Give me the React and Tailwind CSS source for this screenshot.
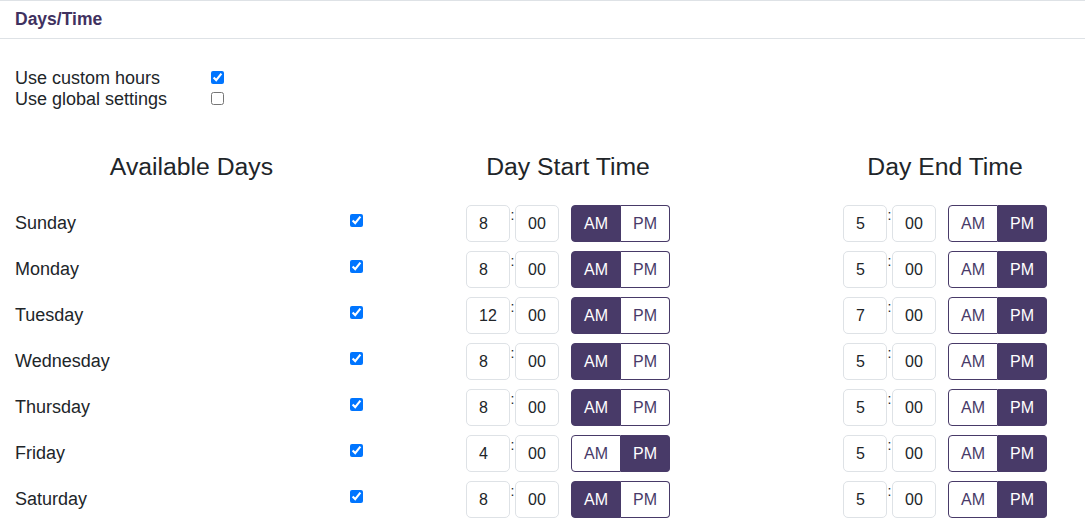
const DAYS = [
  { day: 'Sunday', start: ['8', '00', 'AM'], end: ['5', '00', 'PM'] },
  { day: 'Monday', start: ['8', '00', 'AM'], end: ['5', '00', 'PM'] },
  { day: 'Tuesday', start: ['12', '00', 'AM'], end: ['7', '00', 'PM'] },
  { day: 'Wednesday', start: ['8', '00', 'AM'], end: ['5', '00', 'PM'] },
  { day: 'Thursday', start: ['8', '00', 'AM'], end: ['5', '00', 'PM'] },
  { day: 'Friday', start: ['4', '00', 'PM'], end: ['5', '00', 'PM'] },
  { day: 'Saturday', start: ['8', '00', 'AM'], end: ['5', '00', 'PM'] },
]

function TimePicker({ hour, minute, period }) {
  return (
    <div className="flex items-center h-[37px]">
      <div className="w-[44px] h-[37px] border border-[#dee2e6] rounded-[5px] flex items-center pl-[12px] text-[16px] text-[#212529]">
        {hour}
      </div>
      <span className="w-[5px] self-start text-[14px] leading-[14px] pt-[3px] text-[#212529] text-center">:</span>
      <div className="w-[44px] h-[37px] border border-[#dee2e6] rounded-[5px] flex items-center pl-[12px] text-[16px] text-[#212529]">
        {minute}
      </div>
      <div className="flex ml-[12px] h-[37px]">
        <div
          className={`w-[50px] h-[37px] flex items-center justify-center rounded-l-[4px] border border-[#483a68] text-[16px] ${
            period === 'AM' ? 'bg-[#483a68] text-white' : 'bg-white text-[#483a68]'
          }`}
        >
          AM
        </div>
        <div
          className={`w-[49px] h-[37px] flex items-center justify-center rounded-r-[4px] border border-l-0 border-[#483a68] text-[16px] ${
            period === 'PM' ? 'bg-[#483a68] text-white' : 'bg-white text-[#483a68]'
          }`}
        >
          PM
        </div>
      </div>
    </div>
  )
}

export default function App() {
  return (
    <div className="w-[1085px] h-[527px] overflow-hidden bg-white text-[#212529]" style={{ fontFamily: '"Liberation Sans", Arial, sans-serif' }}>
      <div className="border-t border-b border-[#dee2e6] h-[39px] px-[15px] flex items-center">
        <h2 className="text-[17.5px] font-bold text-[#3f3160]">Days/Time</h2>
      </div>

      <div className="px-[15px] pt-[29px]">
        <div className="grid grid-cols-[196px_20px] text-[18px] leading-[21px]">
          <span>Use custom hours</span>
          <input type="checkbox" defaultChecked className="w-[13px] h-[13px] mt-[3px]" />
          <span>Use global settings</span>
          <input type="checkbox" className="w-[13px] h-[13px] mt-[3px]" />
        </div>
      </div>

      <div className="flex w-[1137px] mt-[42px]">
        <div className="w-[383px] shrink-0">
          <h3 className="text-[24.75px] leading-[30px] text-center">Available Days</h3>
        </div>
        <div className="w-[370px] shrink-0">
          <h3 className="text-[24.75px] leading-[30px] text-center">Day Start Time</h3>
        </div>
        <div className="w-[384px] shrink-0">
          <h3 className="text-[24.75px] leading-[30px] text-center">Day End Time</h3>
        </div>
      </div>

      <div className="mt-[23px] flex flex-col gap-[9px]">
        {DAYS.map(d => (
          <div key={d.day} className="flex w-[1137px] items-center h-[37px]">
            <div className="w-[383px] shrink-0 flex items-center pl-[15px]">
              <span className="w-[335px] text-[18px]">{d.day}</span>
              <input type="checkbox" defaultChecked className="w-[13px] h-[13px] -mt-[6px]" />
            </div>
            <div className="w-[370px] shrink-0 flex justify-center">
              <TimePicker hour={d.start[0]} minute={d.start[1]} period={d.start[2]} />
            </div>
            <div className="w-[384px] shrink-0 flex justify-center">
              <TimePicker hour={d.end[0]} minute={d.end[1]} period={d.end[2]} />
            </div>
          </div>
        ))}
      </div>
    </div>
  )
}
